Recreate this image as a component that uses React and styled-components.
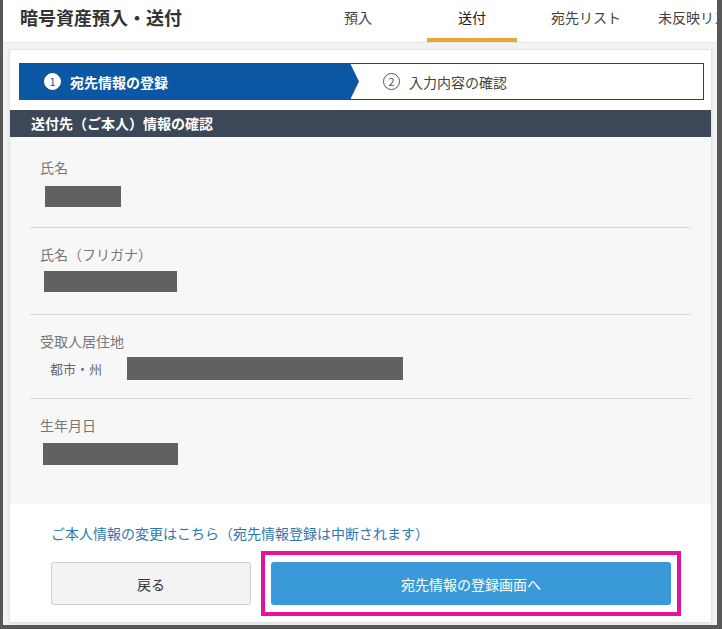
import React from "react";
import styled, { createGlobalStyle } from "styled-components";

const Global = createGlobalStyle`
  html, body { margin: 0; padding: 0; background: #585858; }
  * { box-sizing: border-box; }
  body { font-family: "Noto Sans CJK JP", "Noto Sans", sans-serif; }
`;

const Frame = styled.div`
  width: 722px;
  height: 629px;
  border-left: 3px solid #585858;
  border-right: 5px solid #585858;
  border-bottom: 4px solid #585858;
  background: #f3f3f3;
  overflow: hidden;
  display: flex;
  flex-direction: column;
`;

const Header = styled.header`
  height: 43px;
  background: #fff;
  border-bottom: 1px solid #e4e4e4;
  display: flex;
  align-items: stretch;
  flex-shrink: 0;
`;

const Title = styled.h1`
  margin: 0;
  padding: 6px 0 0 17px;
  font-size: 18px;
  line-height: 22px;
  font-weight: 700;
  color: #333;
  width: 310px;
  flex-shrink: 0;
  white-space: nowrap;
`;

const Tabs = styled.nav`
  display: flex;
  gap: 24px;
  flex-shrink: 0;
`;

const Tab = styled.div`
  width: 90px;
  flex-shrink: 0;
  text-align: center;
  font-size: 14px;
  line-height: 20px;
  padding-top: 7px;
  color: ${(p) => (p.$active ? "#222" : "#444")};
  white-space: nowrap;
  border-bottom: 4px solid ${(p) => (p.$active ? "#e8a838" : "transparent")};
  height: 42px;
`;

const Main = styled.main`
  flex: 1;
  padding: 6px 5px 2px 6px;
  display: flex;
`;

const Card = styled.section`
  flex: 1;
  background: #fff;
  border: 1px solid #e3e3e3;
  box-shadow: 0 1px 3px rgba(0, 0, 0, 0.08);
  display: flex;
  flex-direction: column;
`;

const Stepper = styled.div`
  margin: 13px 7px 10px 9px;
  height: 37px;
  border: 1px solid #23476b;
  display: flex;
  align-items: stretch;
`;

const ActiveStep = styled.div`
  width: 340px;
  margin: -1px 0 -1px -1px;
  background: #0b57a4;
  clip-path: polygon(0 0, 331px 0, 100% 50%, 331px 100%, 0 100%);
  display: flex;
  align-items: center;
  padding-left: 25px;
  gap: 9px;
  color: #fff;
  font-size: 14px;
  font-weight: 700;
`;

const Step = styled.div`
  flex: 1;
  display: flex;
  align-items: center;
  padding-left: 24px;
  gap: 9px;
  color: #444;
  font-size: 14px;
`;

const Circle = styled.span`
  width: 17px;
  height: 17px;
  border-radius: 50%;
  display: inline-flex;
  align-items: center;
  justify-content: center;
  font-size: 11px;
  font-weight: 400;
  line-height: 1;
  background: ${(p) => (p.$filled ? "#fff" : "transparent")};
  color: ${(p) => (p.$filled ? "#0b57a4" : "#555")};
  border: 1px solid ${(p) => (p.$filled ? "#fff" : "#555")};
`;

const SectionHead = styled.h2`
  margin: 0;
  height: 27px;
  background: #3c4858;
  color: #fff;
  font-size: 14px;
  font-weight: 700;
  line-height: 27px;
  padding-left: 21px;
`;

const Fields = styled.div`
  background: #f7f7f7;
  padding: 0 20px 0 20px;
  height: 367px;
`;

const Field = styled.div`
  padding: ${(p) => p.$top}px 0 ${(p) => p.$bottom}px 10px;
  border-top: ${(p) => (p.$first ? "none" : "1px solid #d9d9d9")};
`;

const Label = styled.div`
  font-size: 14px;
  line-height: 20px;
  color: #777;
  margin-bottom: ${(p) => p.$gap}px;
`;

const ValueRow = styled.div`
  display: flex;
  align-items: center;
  height: ${(p) => p.$h || 21}px;
  padding-left: ${(p) => p.$indent}px;
`;

const Sub = styled.span`
  font-size: 13px;
  line-height: 18px;
  color: #666;
  width: 87px;
  padding-left: 10px;
`;

const Redacted = styled.div`
  height: 100%;
  background: #616161;
`;

const Footer = styled.div`
  padding: 19px 0 0 41px;
  display: flex;
  flex-direction: column;
`;

const Link = styled.a`
  font-size: 14px;
  line-height: 20px;
  color: #2f78ad;
  text-decoration: none;
  margin-bottom: 8px;
`;

const Buttons = styled.div`
  display: flex;
  align-items: center;
  gap: 10px;
`;

const BackButton = styled.button`
  width: 200px;
  height: 43px;
  background: #f3f3f3;
  border: 1px solid #cfcfcf;
  border-radius: 3px;
  font-family: inherit;
  font-size: 14px;
  color: #333;
`;

const Highlight = styled.div`
  border: 4px solid #e5139c;
  padding: 7px 6px;
`;

const PrimaryButton = styled.button`
  width: 400px;
  height: 43px;
  background: #3a9ad9;
  border: none;
  border-radius: 3px;
  font-family: inherit;
  font-size: 14px;
  color: #fff;
  display: block;
`;

export default function App() {
  return (
    <>
      <Global />
      <Frame>
        <Header>
          <Title>暗号資産預入・送付</Title>
          <Tabs>
            <Tab>預入</Tab>
            <Tab $active>送付</Tab>
            <Tab>宛先リスト</Tab>
            <Tab>未反映リスト</Tab>
          </Tabs>
        </Header>
        <Main>
          <Card>
            <Stepper>
              <ActiveStep>
                <Circle $filled>1</Circle>
                宛先情報の登録
              </ActiveStep>
              <Step>
                <Circle>2</Circle>
                入力内容の確認
              </Step>
            </Stepper>
            <SectionHead>送付先（ご本人）情報の確認</SectionHead>
            <Fields>
              <Field $first $top={20} $bottom={20}>
                <Label $gap={9}>氏名</Label>
                <ValueRow $indent={5}>
                  <Redacted style={{ width: 76 }} />
                </ValueRow>
              </Field>
              <Field $top={16} $bottom={22}>
                <Label $gap={7}>氏名（フリガナ）</Label>
                <ValueRow $indent={4}>
                  <Redacted style={{ width: 133 }} />
                </ValueRow>
              </Field>
              <Field $top={16} $bottom={18}>
                <Label $gap={6}>受取人居住地</Label>
                <ValueRow $indent={0} $h={23}>
                  <Sub>都市・州</Sub>
                  <Redacted style={{ width: 276 }} />
                </ValueRow>
              </Field>
              <Field $top={16} $bottom={20}>
                <Label $gap={8}>生年月日</Label>
                <ValueRow $indent={3} $h={22}>
                  <Redacted style={{ width: 135 }} />
                </ValueRow>
              </Field>
            </Fields>
            <Footer>
              <Link href="#">ご本人情報の変更はこちら（宛先情報登録は中断されます）</Link>
              <Buttons>
                <BackButton>戻る</BackButton>
                <Highlight>
                  <PrimaryButton>宛先情報の登録画面へ</PrimaryButton>
                </Highlight>
              </Buttons>
            </Footer>
          </Card>
        </Main>
      </Frame>
    </>
  );
}
